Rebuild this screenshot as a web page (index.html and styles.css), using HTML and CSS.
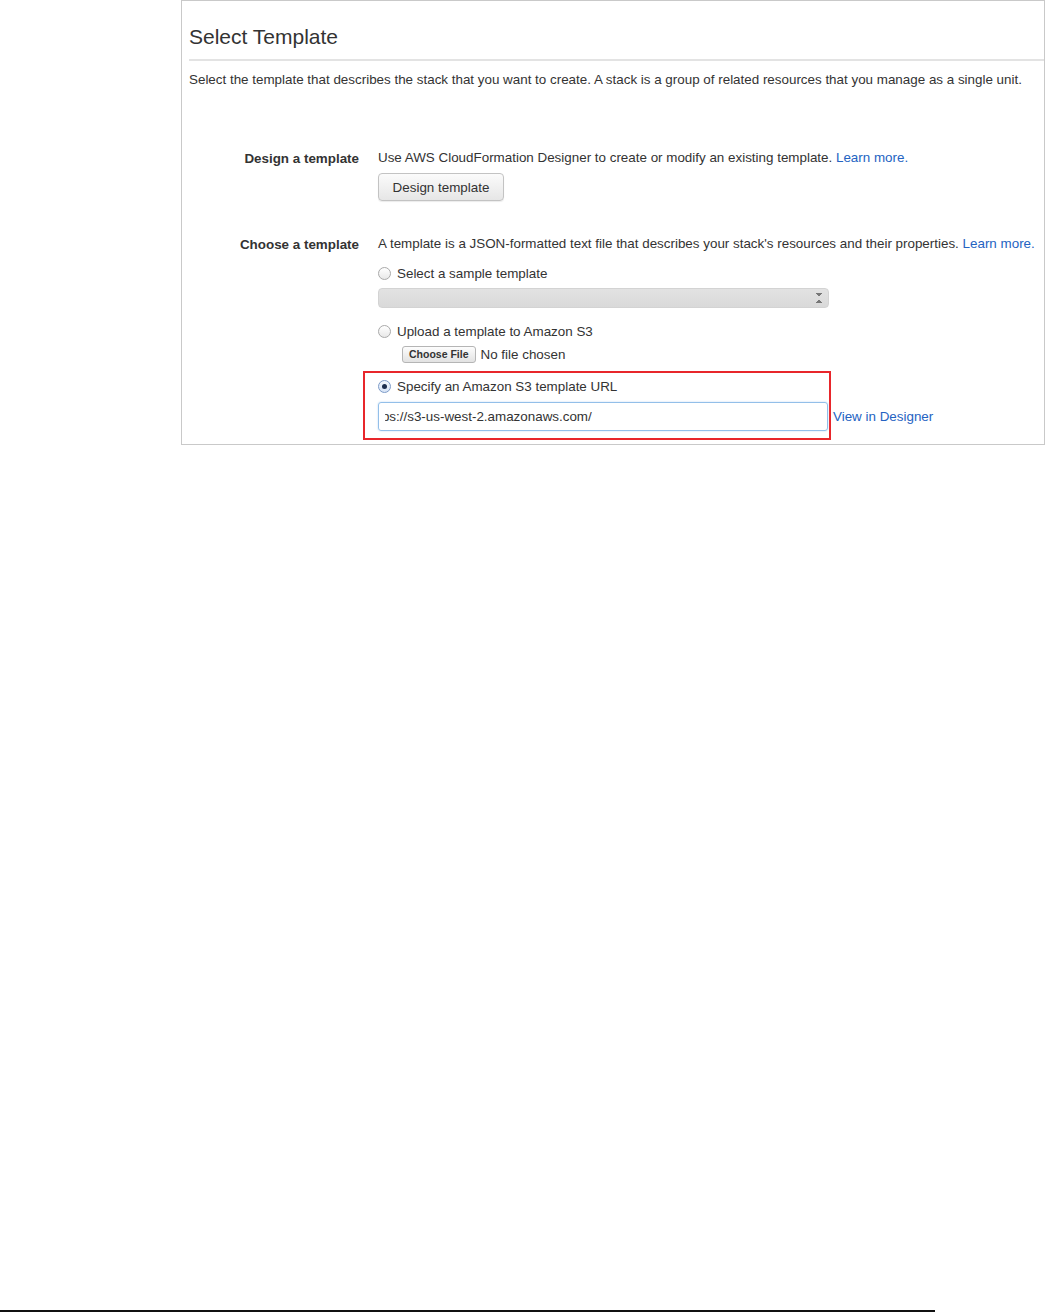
FILE: index.html
```html
<!DOCTYPE html>
<html>
<head>
<meta charset="utf-8">
<link rel="stylesheet" href="styles.css">
</head>
<body>
<div class="page">
  <section class="panel">
    <header class="panel-head">
      <h1 class="title">Select Template</h1>
    </header>
    <p class="intro">Select the template that describes the stack that you want to create. A stack is a group of related resources that you manage as a single unit.</p>

    <div class="row row-design">
      <div class="label">Design a template</div>
      <div class="field">
        <div class="text">Use AWS CloudFormation Designer to create or modify an existing template. <a class="link">Learn more.</a></div>
        <button class="btn">Design template</button>
      </div>
    </div>

    <div class="row row-choose">
      <div class="label">Choose a template</div>
      <div class="field">
        <div class="text">A template is a JSON-formatted text file that describes your stack's resources and their properties. <a class="link">Learn more.</a></div>
        <div class="option opt-sample">
          <span class="radio"></span><span>Select a sample template</span>
        </div>
        <div class="select"><span class="arrows"></span></div>
        <div class="option opt-upload">
          <span class="radio"></span><span>Upload a template to Amazon S3</span>
        </div>
        <div class="file-row">
          <span class="file-btn">Choose File</span><span class="file-name">No file chosen</span>
        </div>
        <div class="url-block">
          <div class="highlight">
            <div class="option opt-url">
              <span class="radio checked"></span><span>Specify an Amazon S3 template URL</span>
            </div>
            <div class="url-input"><div class="url-clip"><span class="url-text">https://s3-us-west-2.amazonaws.com/</span></div></div>
          </div>
          <a class="link view-link">View in Designer</a>
        </div>
      </div>
    </div>
  </section>
  <div class="footer-rule"></div>
</div>
</body>
</html>
```

FILE: styles.css
```css
html, body {
  margin: 0;
  padding: 0;
  background: #ffffff;
}

body {
  font-family: "Liberation Sans", Arial, Helvetica, sans-serif;
  font-size: 13.4px;
  color: #333333;
}

.page {
  width: 1046px;
  height: 1313px;
  display: flex;
  flex-direction: column;
}

.panel {
  margin-left: 181px;
  width: 862px;
  height: 443px;
  border: 1px solid #c9c9c9;
  box-sizing: content-box;
}

.panel-head {
  margin-left: 7px;
  padding-top: 24px;
  height: 34px;
  border-bottom: 2px solid #e3e3e3;
}

.title {
  margin: 0;
  font-size: 21px;
  font-weight: normal;
  line-height: 24px;
  color: #333333;
}

.intro {
  margin: 10px 0 0 7px;
  line-height: 17px;
  color: #333333;
}

.row {
  display: grid;
  grid-template-columns: 177px 1fr;
  column-gap: 19px;
}

.row-design {
  margin-top: 61px;
}

.row-choose {
  margin-top: 34px;
}

.label {
  text-align: right;
  font-weight: bold;
  line-height: 17px;
  color: #333333;
}

.row-design .label {
  padding-top: 1px;
}

.row-choose .label {
  padding-top: 1px;
}

.text {
  line-height: 17px;
}

.link {
  color: #2463c2;
  text-decoration: none;
}

.btn {
  display: block;
  margin-top: 7px;
  width: 126px;
  height: 28px;
  padding: 0;
  font-family: inherit;
  font-size: 13.4px;
  color: #333333;
  border: 1px solid #c3c3c3;
  border-radius: 4px;
  background: linear-gradient(#fbfbfb, #e6e6e6);
  box-shadow: 0 1px 1px rgba(0, 0, 0, 0.08);
}

.option {
  display: flex;
  align-items: center;
  gap: 6px;
  line-height: 17px;
}

.opt-sample {
  margin-top: 13px;
}

.opt-upload {
  margin-top: 15px;
}

.radio {
  width: 11px;
  height: 11px;
  border: 1px solid #a9a9a9;
  border-radius: 50%;
  background: linear-gradient(#ffffff, #e8e8e8);
  box-sizing: content-box;
  position: relative;
  flex: none;
}

.radio.checked {
  border-color: #7d9bc8;
  background: linear-gradient(#f4f8fd, #d7e4f6);
}

.radio.checked::after {
  content: "";
  position: absolute;
  left: 3px;
  top: 3px;
  width: 5px;
  height: 5px;
  border-radius: 50%;
  background: #1d2f4e;
}

.select {
  margin-top: 6px;
  width: 449px;
  height: 18px;
  border: 1px solid #d3d3d3;
  border-radius: 4px;
  background: linear-gradient(#e2e2e2, #d9d9d9);
  display: flex;
  justify-content: flex-end;
  align-items: center;
}

.arrows {
  width: 6px;
  height: 10px;
  margin-right: 6px;
  background:
    linear-gradient(to top right, transparent 50%, #777 50%) 0 0 / 3px 4px no-repeat,
    linear-gradient(to top left, transparent 50%, #777 50%) 3px 0 / 3px 4px no-repeat,
    linear-gradient(to bottom right, transparent 50%, #777 50%) 0 6px / 3px 4px no-repeat,
    linear-gradient(to bottom left, transparent 50%, #777 50%) 3px 6px / 3px 4px no-repeat;
}

.file-row {
  margin-top: 5px;
  margin-left: 24px;
  display: flex;
  align-items: center;
  gap: 5px;
  height: 18px;
}

.file-btn {
  display: inline-block;
  height: 15px;
  line-height: 15px;
  padding: 0 6px;
  font-size: 10.5px;
  font-weight: bold;
  color: #333;
  border: 1px solid #b5b5b5;
  border-radius: 3px;
  background: linear-gradient(#fdfdfd, #e2e2e2);
}

.file-name {
  line-height: 17px;
}

.url-block {
  display: flex;
  align-items: flex-end;
  margin-left: -15px;
  margin-top: 8px;
}

.highlight {
  width: 451px;
  border: 2px solid #e8262b;
  padding: 0 0 7px 13px;
  box-sizing: content-box;
  display: flex;
  flex-direction: column;
}

.opt-url {
  margin-top: 5px;
}

.url-input {
  margin-top: 7px;
  height: 27px;
  padding-left: 6px;
  box-sizing: content-box;
  border: 1px solid #93bfe9;
  border-radius: 3px;
  box-shadow: 0 0 2px #b9d6f3;
  display: flex;
  align-items: center;
  width: 442px;
}

.url-clip {
  flex: 1;
  overflow: hidden;
  white-space: nowrap;
  display: flex;
}

.url-text {
  margin-left: -18px;
}

.view-link {
  margin-left: 2px;
  margin-bottom: 15px;
  line-height: 17px;
}

.footer-rule {
  margin-top: auto;
  margin-bottom: 1px;
  width: 935px;
  height: 2px;
  background: #111111;
}
```
